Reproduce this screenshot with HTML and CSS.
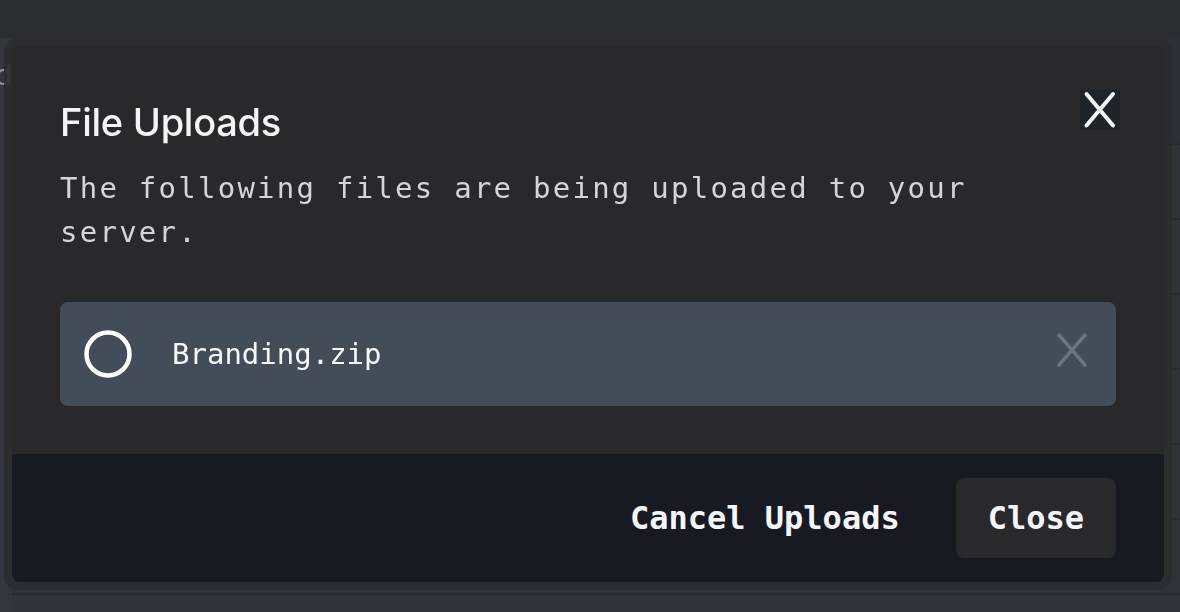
FILE: index.html
```html
<!DOCTYPE html>
<html lang="en">
<head>
<meta charset="utf-8">
<title>File Uploads</title>
<link rel="stylesheet" href="styles.css">
</head>
<body>
<div class="app">
  <div class="topbar"></div>
  <div class="main">
    <div class="side"><span class="side-label">Uploaded</span></div>
    <div class="content">
      <div class="content-head"></div>
      <div class="list-row"></div>
      <div class="list-row"></div>
      <div class="list-row"></div>
      <div class="list-row"></div>
      <div class="list-row"></div>
      <div class="list-row"></div>
    </div>
  </div>
</div>

<div class="modal">
  <div class="dialog">
    <div class="dialog-body">
      <div class="dialog-head">
        <h2 class="dialog-title">File Uploads</h2>
        <button class="dismiss" aria-label="Close">
          <svg width="40" height="40" viewBox="0 0 40 40"><path d="M6.5 4L33 35.5M33 4L6.5 35.5" stroke="#f5f6f8" stroke-width="4" stroke-linecap="round" fill="none"/></svg>
        </button>
      </div>
      <p class="dialog-desc">The following files are being uploaded to your server.</p>
      <div class="file-row">
        <svg class="file-status" width="48" height="48" viewBox="0 0 48 48"><circle cx="24" cy="24" r="21.5" stroke="#ffffff" stroke-width="4.5" fill="none"/></svg>
        <span class="file-name">Branding.zip</span>
        <svg class="file-remove" width="32" height="36" viewBox="0 0 32 36"><path d="M3 3L29 33M29 3L3 33" stroke="#6b7481" stroke-width="3.5" stroke-linecap="round" fill="none"/></svg>
      </div>
    </div>
    <div class="dialog-foot">
      <button class="btn btn-ghost">Cancel Uploads</button>
      <button class="btn btn-solid">Close</button>
    </div>
  </div>
</div>
</body>
</html>
```

FILE: styles.css
```css
* { box-sizing: border-box; }

html, body {
  margin: 0;
  padding: 0;
}

body {
  width: 1180px;
  height: 612px;
  overflow: hidden;
  background: #2b2d31;
  font-family: "DejaVu Sans Mono", monospace;
}

.app {
  display: flex;
  flex-direction: column;
  height: 612px;
}

.topbar {
  height: 38px;
  background: #2b2d31;
  flex: none;
}

.main {
  flex: 1;
  display: flex;
  background: #30333a;
}

.side {
  width: 12px;
  flex: none;
  background: #33363c;
  overflow: hidden;
}

.side-label {
  display: block;
  font-family: Inter, sans-serif;
  font-size: 28px;
  color: #8a8f98;
  white-space: nowrap;
  direction: rtl;
  margin-top: 20px;
  width: 12px;
  text-align: right;
}

.content {
  flex: 1;
  display: flex;
  flex-direction: column;
}

.content-head {
  height: 107px;
  background: #2c2f34;
  border-bottom: 2px solid #2a2c31;
}

.list-row {
  height: 75px;
  border-bottom: 2px solid #2a2c31;
}

/* modal */
.modal {
  position: fixed;
  left: 4px;
  top: 38px;
  width: 1168px;
  height: 552px;
  padding: 8px;
  background: rgba(45, 45, 47, 0.92);
  border-radius: 14px;
}

.dialog {
  height: 100%;
  display: flex;
  flex-direction: column;
  background: #29292b;
  border-radius: 8px;
  overflow: hidden;
}

.dialog-body {
  height: 408px;
  padding: 54px 48px 48px;
  display: flex;
  flex-direction: column;
}

.dialog-head {
  display: flex;
  align-items: flex-start;
  justify-content: space-between;
}

.dialog-title {
  margin: 0;
  font-family: Inter, "Liberation Sans", sans-serif;
  font-size: 38px;
  line-height: 44px;
  font-weight: 500;
  letter-spacing: -0.25px;
  color: #f4f4f6;
}

.dismiss {
  width: 40px;
  height: 40px;
  margin: -10px -4px 0 0;
  padding: 0;
  border: none;
  border-radius: 2px;
  background: #1f242b;
  display: flex;
  align-items: center;
  justify-content: center;
  cursor: pointer;
}

.dismiss svg { display: block; }

.dialog-desc {
  margin: 22px 0 0;
  font-size: 29px;
  line-height: 44px;
  letter-spacing: 2.25px;
  color: #d3d5da;
  max-width: 940px;
}

.file-row {
  margin-top: 48px;
  height: 104px;
  background: #434d5a;
  border-radius: 8px;
  display: flex;
  align-items: center;
  padding: 0 28px 0 24px;
}

.file-status { display: block; flex: none; }

.file-name {
  flex: 1;
  margin-left: 40px;
  font-size: 29px;
  color: #f7f7f8;
}

.file-remove {
  display: block;
  flex: none;
  margin-bottom: 9px;
}

.dialog-foot {
  height: 128px;
  background: #171a21;
  display: flex;
  justify-content: flex-end;
  align-items: center;
  gap: 24px;
  padding: 0 48px;
}

.btn {
  font-family: "DejaVu Sans Mono", monospace;
  font-size: 32px;
  font-weight: 700;
  line-height: 40px;
  padding: 20px 32px;
  border: none;
  border-radius: 8px;
  color: #f5f6fa;
  cursor: pointer;
}

.btn-ghost { background: transparent; }
.btn-solid { background: #29292b; }
```
